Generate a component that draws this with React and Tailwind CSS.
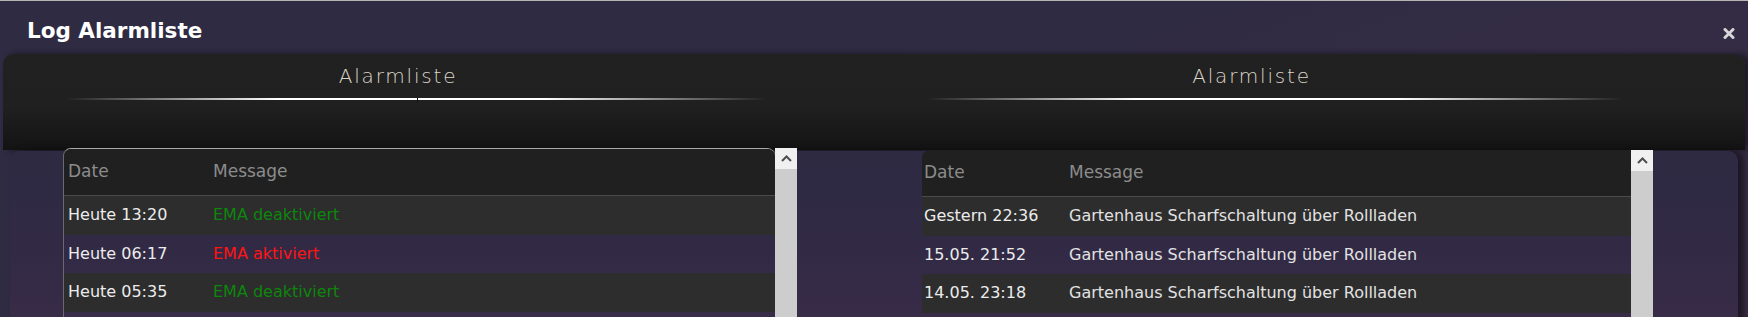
import React from 'react'

const LEFT_ROWS = [
  { date: 'Heute 13:20', msg: 'EMA deaktiviert', tone: 'text-[#0c870c]' },
  { date: 'Heute 06:17', msg: 'EMA aktiviert',   tone: 'text-[#ff1414]' },
  { date: 'Heute 05:35', msg: 'EMA deaktiviert', tone: 'text-[#0c870c]' },
  { date: '', msg: '', tone: '' },
]

const RIGHT_ROWS = [
  { date: 'Gestern 22:36', msg: 'Gartenhaus Scharfschaltung über Rollladen', tone: 'text-[#e2e2e2]' },
  { date: '15.05. 21:52',  msg: 'Gartenhaus Scharfschaltung über Rollladen', tone: 'text-[#e2e2e2]' },
  { date: '14.05. 23:18',  msg: 'Gartenhaus Scharfschaltung über Rollladen', tone: 'text-[#e2e2e2]' },
  { date: '', msg: '', tone: '' },
]

function Scrollbar() {
  return (
    <div className="flex w-[22px] flex-col bg-[#cdcdcd]">
      <div className="flex h-[21px] items-center justify-center bg-[#f0f0f0]">
        <svg width="11" height="7" viewBox="0 0 11 7">
          <path d="M1 6 L5.5 1.5 L10 6" fill="none" stroke="#4e4e4e" strokeWidth="2" />
        </svg>
      </div>
    </div>
  )
}

function Heading({ width, shift, tick }) {
  return (
    <div className={width}>
      <div className={`${shift} text-center text-[20px] leading-[24px] font-extralight tracking-[1.8px] text-[#dcd5c8]`}>
        Alarmliste
      </div>
      <div className="mt-[10px] flex h-[2px] justify-center bg-[linear-gradient(90deg,rgba(255,255,255,0)_0%,#ffffff_30%,#ffffff_68%,rgba(255,255,255,0)_100%)]">
        {tick && <div className="h-[4px] w-[1px] bg-[#111]" />}
      </div>
    </div>
  )
}

function LogTable({ rows, box, cellPad, col1 }) {
  return (
    <div className="flex">
      <div className={box}>
        <div className={`flex h-[47px] items-center border-b border-[#4a4a4a] bg-[#202020] text-[17px] text-[#8c8c8c] ${cellPad}`}>
          <div className={col1}>Date</div>
          <div>Message</div>
        </div>
        {rows.map((r, i) => (
          <div
            key={i}
            className={`flex h-[38.5px] items-center text-[16px] ${cellPad} ${i % 2 === 0 ? 'bg-[#2d2d2d]' : 'bg-transparent'}`}
          >
            <div className={`${col1} text-[#ececec]`}>{r.date}</div>
            <div className={r.tone}>{r.msg}</div>
          </div>
        ))}
      </div>
      <Scrollbar />
    </div>
  )
}

export default function App() {
  return (
    <div className="h-[317px] w-[1748px] overflow-hidden border-t border-[#b5b5b5] bg-[linear-gradient(160deg,#2e2b42_0%,#2f2b43_45%,#3b2d47_100%)] font-['DejaVu_Sans',sans-serif]">

      {/* title bar */}
      <div className="flex h-[53px] items-start justify-between pl-[27px] pr-[13px]">
        <div className="pt-[17px] text-[21.5px] font-bold leading-[25px] text-white">Log Alarmliste</div>
        <svg className="mt-[27px]" width="12" height="11" viewBox="0 0 12 11">
          <path d="M2 1.5 L10 9.5 M10 1.5 L2 9.5" stroke="#d6d6d6" strokeWidth="3" strokeLinecap="round" />
        </svg>
      </div>

      {/* widget headers */}
      <div className="mx-[3px] flex h-[96px] rounded-t-[10px] bg-[linear-gradient(to_bottom,#212121_0%,#202020_55%,#131313_100%)] pl-[64px] pt-[10px] shadow-[5px_0_6px_rgba(0,0,0,0.45)]">
        <Heading width="w-[700px]" shift="pr-[38px]" tick />
        <div className="w-[160px]" />
        <Heading width="w-[696px]" shift="pr-[47px]" />
      </div>

      {/* list area */}
      <div className="mx-[10px] mt-[1px] flex h-[200px] items-start rounded-t-[10px] bg-[linear-gradient(to_bottom,#2d2a42_0%,#322a45_50%,#3b2c48_100%)] pl-[53px] shadow-[6px_0_6px_rgba(0,0,0,0.5)]">
        <div className="-mt-[3px]">
          <LogTable
            rows={LEFT_ROWS}
            box="w-[712px] overflow-hidden rounded-t-[8px] border-l border-t border-l-[#6a6a6a] border-t-[#a8a8a8]"
            cellPad="pl-[4px]"
            col1="w-[145px]"
          />
        </div>
        <div className="-mt-[1px] ml-[125px]">
          <LogTable
            rows={RIGHT_ROWS}
            box="w-[709px] overflow-hidden rounded-tl-[8px]"
            cellPad="pl-[2px]"
            col1="w-[145px]"
          />
        </div>
      </div>
    </div>
  )
}
